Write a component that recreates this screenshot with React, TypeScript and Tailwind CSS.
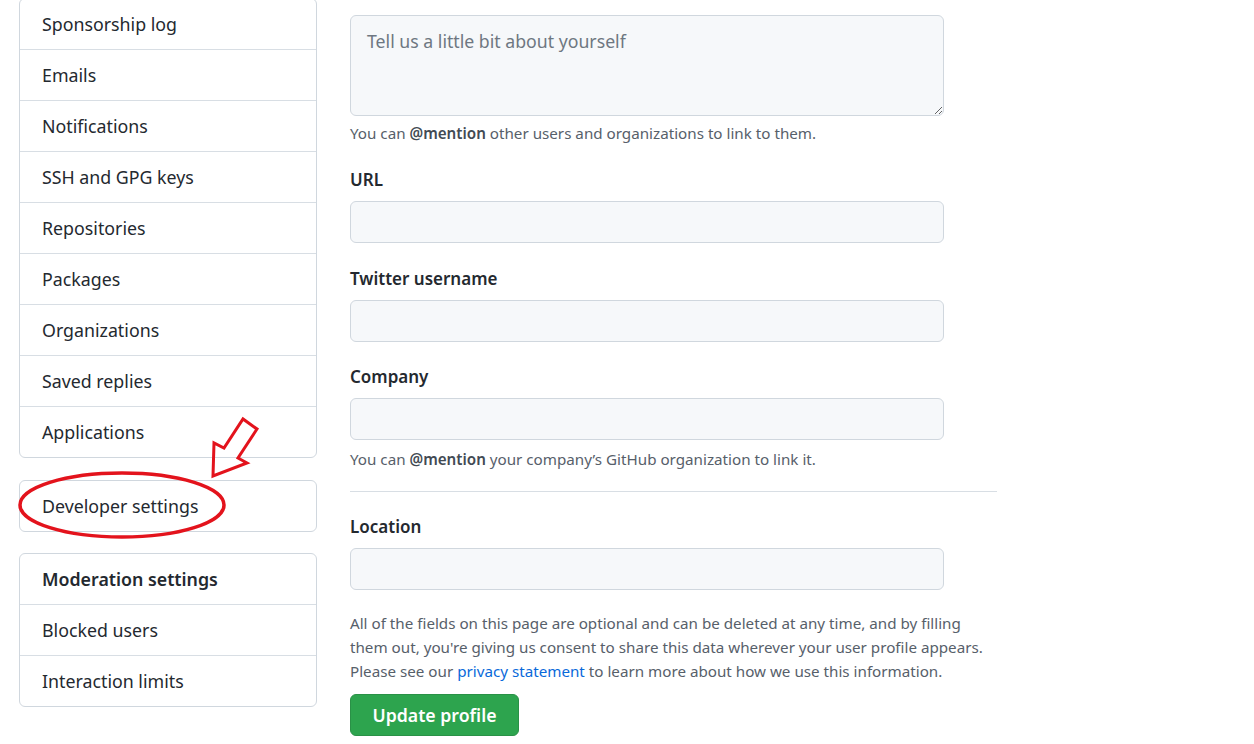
import React from "react"

/* ── Sidebar data ─────────────────────────────────────────────── */
const accountItems = [
  "Sponsorship log",
  "Emails",
  "Notifications",
  "SSH and GPG keys",
  "Repositories",
  "Packages",
  "Organizations",
  "Saved replies",
  "Applications",
]

const moderationItems = ["Blocked users", "Interaction limits"]

function MenuRow({ label, last, bold }: { label: string; last?: boolean; bold?: boolean }) {
  return (
    <div
      className={
        "flex items-center pl-[22px] text-[17.8px] text-[#24292f] " +
        (last ? "h-[50px] " : "h-[51px] border-b border-[#d8dee4] ") +
        (bold ? "font-semibold" : "")
      }
    >
      {label}
    </div>
  )
}

function Field({ label, className }: { label: string; className?: string }) {
  return (
    <div className={className}>
      <label className="block text-[17px] leading-[24px] font-semibold text-[#24292f]">{label}</label>
      <input
        type="text"
        className="mt-[9px] block w-[594px] h-[42px] rounded-md border border-[#d0d7de] bg-[#f6f8fa] px-3 outline-none"
      />
    </div>
  )
}

export default function App() {
  return (
    <div className="relative h-[744px] overflow-hidden bg-white font-['Noto_Sans','Open_Sans',sans-serif]">
      <div className="flex items-start">
        {/* ── Sidebar ──────────────────────────────────────────── */}
        <aside className="ml-[19px] w-[298px] -mt-[2px] shrink-0">
          <div className="rounded-md border border-[#d0d7de]">
            {accountItems.map((item, i) => (
              <MenuRow key={item} label={item} last={i === accountItems.length - 1} />
            ))}
          </div>

          <div className="mt-[22px] rounded-md border border-[#d0d7de]">
            <MenuRow label="Developer settings" last />
          </div>

          <div className="mt-[21px] rounded-md border border-[#d0d7de]">
            <MenuRow label="Moderation settings" bold />
            {moderationItems.map((item, i) => (
              <MenuRow key={item} label={item} last={i === moderationItems.length - 1} />
            ))}
          </div>
        </aside>

        {/* ── Profile form ─────────────────────────────────────── */}
        <main className="ml-[33px] w-[647px] pt-[15px]">
          <textarea
            placeholder="Tell us a little bit about yourself"
            className="block w-[594px] h-[101px] rounded-md border border-[#d0d7de] bg-[#f6f8fa] px-4 py-[12px] text-[17.7px] text-[#24292f] placeholder:text-[#6e7781] outline-none"
          />
          <p className="mt-[6px] text-[15.2px] leading-[22px] text-[#57606a]">
            You can <span className="font-semibold text-[#424a53]">@mention</span> other users and organizations to link to them.
          </p>

          <Field label="URL" className="mt-[24px]" />
          <Field label="Twitter username" className="mt-[24px]" />
          <Field label="Company" className="mt-[23px]" />

          <p className="mt-[8px] text-[15.2px] leading-[22px] text-[#57606a]">
            You can <span className="font-semibold text-[#424a53]">@mention</span> your company’s GitHub organization to link it.
          </p>

          <div className="mt-[21px] h-px bg-[#d8dee4]" />

          <Field label="Location" className="mt-[23px]" />

          <p className="mt-[21px] whitespace-nowrap text-[15.2px] leading-[24px] text-[#57606a]">
            All of the fields on this page are optional and can be deleted at any time, and by filling
            <br />
            them out, you're giving us consent to share this data wherever your user profile appears.
            <br />
            Please see our <a className="text-[#0969da]">privacy statement</a> to learn more about how we use this information.
          </p>

          <button className="mt-[11px] h-[42px] w-[169px] rounded-md border border-[#2a9147] bg-[#2da44e] text-[17.7px] font-semibold text-white">
            Update profile
          </button>
        </main>
      </div>

      {/* ── Red annotation overlay ───────────────────────────────── */}
      <svg className="pointer-events-none absolute left-0 top-0" width="330" height="560">
        <ellipse cx="122" cy="505" rx="102" ry="32" fill="none" stroke="#e3131c" strokeWidth="3.5" />
        <polygon
          points="213,476 214,443 224,448 243,419 257,429 238,458 247,463"
          fill="none"
          stroke="#e3131c"
          strokeWidth="3"
          strokeLinejoin="miter"
        />
      </svg>
    </div>
  )
}
